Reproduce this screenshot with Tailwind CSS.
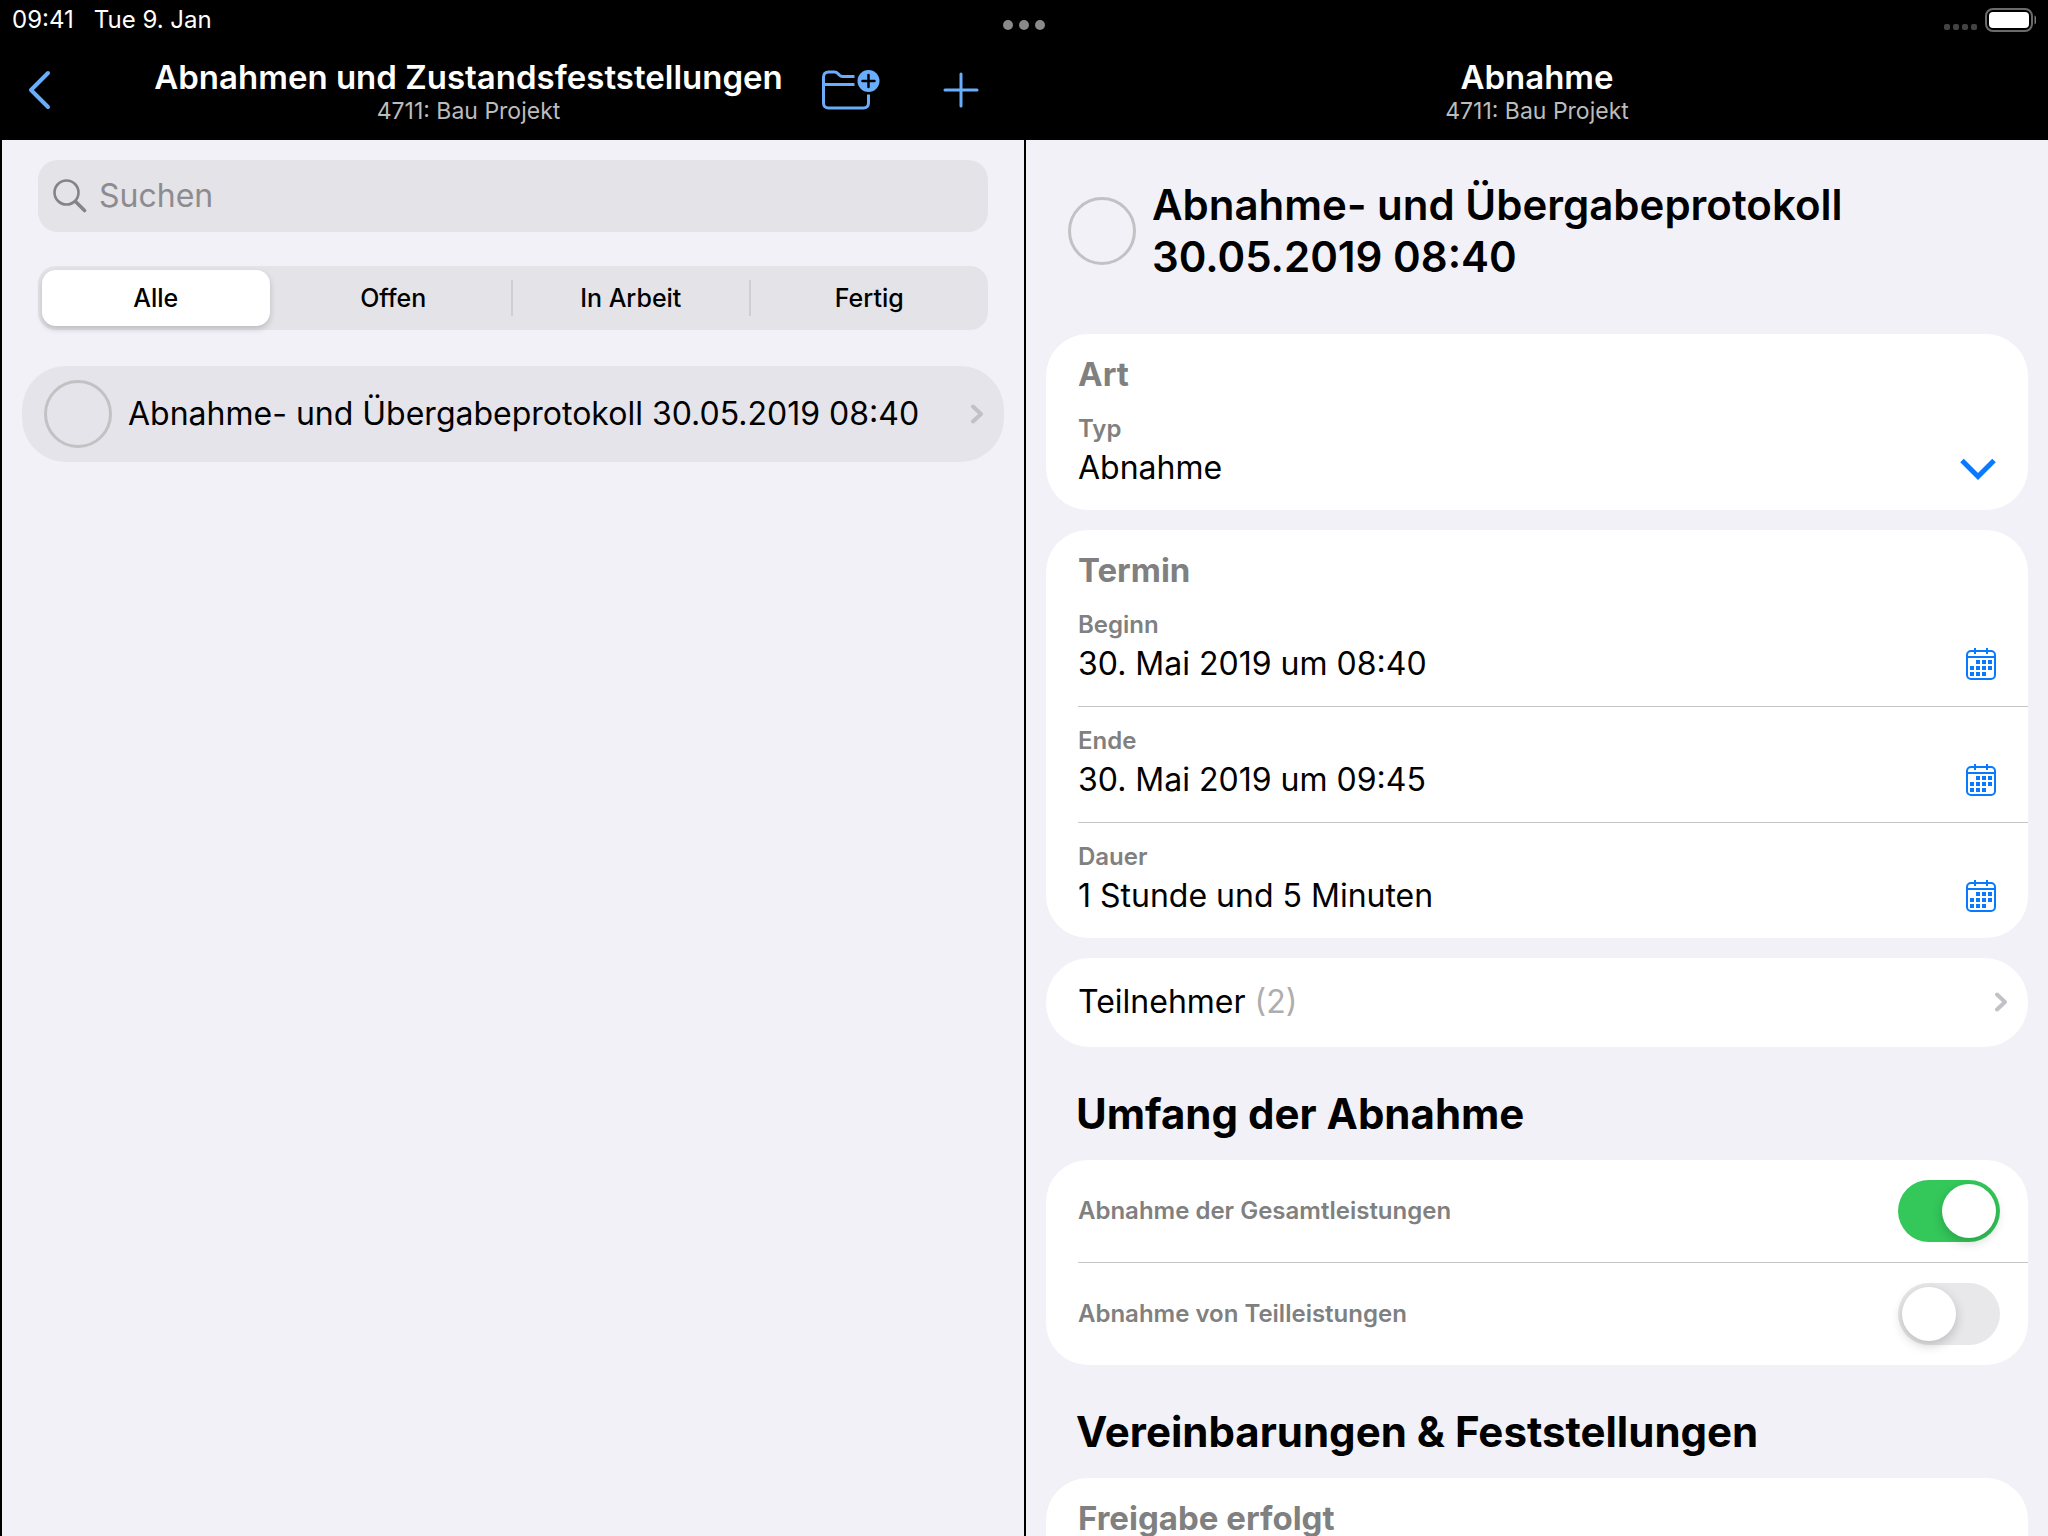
<!DOCTYPE html>
<html lang="de">
<head>
<meta charset="utf-8">
<meta name="viewport" content="width=device-width, initial-scale=1">
<title>Abnahmen und Zustandsfeststellungen</title>
<script src="https://cdn.jsdelivr.net/npm/@tailwindcss/browser@4"></script>
</head>
<body class="flex h-screen flex-col overflow-hidden bg-black font-['Inter','Liberation_Sans',sans-serif] text-black">

<!-- Status bar -->
<div class="grid h-10 shrink-0 grid-cols-3 px-3 text-[24px] leading-10 text-white">
  <div class="flex gap-5"><span>09:41</span><span>Tue 9. Jan</span></div>
  <button class="flex items-center justify-center gap-1.5 pt-2.5" aria-label="Multitasking">
    <span class="size-2.5 rounded-full bg-[#8a8a8a]"></span>
    <span class="size-2.5 rounded-full bg-[#8a8a8a]"></span>
    <span class="size-2.5 rounded-full bg-[#8a8a8a]"></span>
  </button>
  <div class="flex items-center justify-end">
    <svg class="h-10 w-24" viewBox="0 0 96 40" aria-hidden="true">
      <g fill="#434343"><rect x="4" y="24" width="6" height="6" rx="2"/><rect x="13" y="24" width="6" height="6" rx="2"/><rect x="22" y="24" width="6" height="6" rx="2"/><rect x="31" y="24" width="6" height="6" rx="2"/></g>
      <rect x="46" y="9" width="46" height="22" rx="7" fill="none" stroke="#6b6b6b" stroke-width="2"/>
      <rect x="49" y="12" width="40" height="16" rx="4" fill="#fff"/>
      <path d="M94.500 15.500c3 1.500 3 7.500 0 9z" fill="#7a7a7a"/>
    </svg>
  </div>
</div>

<div class="flex min-h-0 flex-1">

  <!-- Master list -->
  <section class="flex w-1/2 flex-col border-l-2 border-black">
    <header class="flex h-[100px] shrink-0 items-center text-white">
      <div class="w-[113px] shrink-0">
        <button class="block pl-[26px]" aria-label="Zurück">
          <svg class="h-10 w-6" viewBox="0 0 24 40" fill="none" stroke="#6aaefb" stroke-width="4" stroke-linecap="round" stroke-linejoin="round"><path d="M20 3 3 20l17 17"/></svg>
        </button>
      </div>
      <div class="flex-1 pt-0.5 text-center whitespace-nowrap">
        <h1 class="-mx-4 text-[33px] leading-10 font-semibold">Abnahmen und Zustandsfeststellungen</h1>
        <p class="text-[23px] leading-7 text-[#bcbcbc]">4711: Bau Projekt</p>
      </div>
      <div class="flex w-[202px] shrink-0 items-center justify-between pr-[45px]">
        <button aria-label="Neuer Ordner">
          <svg class="h-10 w-[58px]" viewBox="0 0 58 40" fill="none" stroke="#6aaefb" stroke-width="3" stroke-linecap="round" stroke-linejoin="round">
            <path d="M32.500 6.500H20.500c-1.500 0-2.200-.5-3.200-1.500l-1.200-1.300c-1-1-2-1.700-3.600-1.700H6.500c-3 0-5 2-5 5V33c0 3 2 5 5 5h35c3 0 5-2 5-5v-8.500" stroke-linecap="butt"/>
            <path d="M1.500 14.500h31" stroke-linecap="butt"/>
            <circle cx="46.500" cy="11" r="11" fill="#6aaefb" stroke="none"/>
            <path d="M46.500 5v12M40.500 11h12" stroke="#000" stroke-width="2.500"/>
          </svg>
        </button>
        <button aria-label="Hinzufügen">
          <svg class="size-9" viewBox="0 0 36 36" fill="none" stroke="#6aaefb" stroke-width="3" stroke-linecap="round"><path d="M18 2v32M2 18h32"/></svg>
        </button>
      </div>
    </header>

    <div class="flex-1 bg-[#f2f1f7] pt-5">
      <label class="mx-9 flex h-[72px] items-center gap-3 rounded-[20px] bg-[#e4e3e8] pl-[15px]">
        <svg class="size-[34px] shrink-0" viewBox="0 0 34 34" fill="none" stroke="#848488" stroke-linecap="round"><circle cx="13.500" cy="13.500" r="12" stroke-width="2.600"/><path d="m23 23 8.500 8.500" stroke-width="3.600"/></svg>
        <input type="search" aria-label="Suchen" placeholder="Suchen" class="w-full bg-transparent text-[32px] leading-10 outline-none placeholder:text-[#8c8c90]">
      </label>

      <div role="radiogroup" aria-label="Status" class="mx-9 mt-[34px] grid h-16 grid-cols-4 rounded-[18px] bg-[#e4e3e8] text-[25px] font-medium">
        <label class="py-1 pr-1.5 pl-1"><input type="radio" name="status" class="peer sr-only" checked><span class="flex h-full items-center justify-center rounded-[14px] bg-white pt-0.5 shadow-[0_3px_6px_rgba(0,0,0,0.18)]">Alle</span></label>
        <label class="flex items-center"><input type="radio" name="status" class="sr-only"><span class="flex h-9 flex-1 items-center justify-center border-r-2 border-[#cfced4] pt-0.5">Offen</span></label>
        <label class="flex items-center"><input type="radio" name="status" class="sr-only"><span class="flex h-9 flex-1 items-center justify-center border-r-2 border-[#cfced4] pt-0.5">In Arbeit</span></label>
        <label class="flex items-center"><input type="radio" name="status" class="sr-only"><span class="flex h-9 flex-1 items-center justify-center pt-0.5">Fertig</span></label>
      </div>

      <a href="#protokoll" class="mx-5 mt-9 flex h-24 items-center rounded-[44px] bg-[#e5e4ea] pr-[21px] pl-[22px]">
        <span class="size-[68px] shrink-0 rounded-full border-3 border-[#c2c2c5]"></span>
        <span class="ml-4 flex-1 text-[32px] leading-10 whitespace-nowrap">Abnahme- und Übergabeprotokoll 30.05.2019 08:40</span>
        <svg class="h-5 w-3 shrink-0" viewBox="0 0 12 20" fill="none" stroke="#c2c1c7" stroke-width="4" stroke-linecap="round" stroke-linejoin="round"><path d="m2 2.500 8 7.500-8 7.500"/></svg>
      </a>
    </div>
  </section>

  <!-- Detail -->
  <section id="protokoll" class="flex w-1/2 flex-col border-l-2 border-black">
    <header class="flex h-[100px] shrink-0 flex-col justify-center pt-0.5 text-center text-white">
      <h2 class="text-[33px] leading-10 font-semibold">Abnahme</h2>
      <p class="text-[23px] leading-7 text-[#bcbcbc]">4711: Bau Projekt</p>
    </header>

    <div class="min-h-0 flex-1 overflow-hidden bg-[#f2f1f7] px-5">
      <div class="flex h-[194px] items-center pb-3 pl-[22px]">
        <span class="size-[68px] shrink-0 rounded-full border-3 border-[#c2c2c5]"></span>
        <h3 class="ml-4 text-[42px] leading-[52px] font-semibold">Abnahme- und Übergabeprotokoll<br>30.05.2019 08:40</h3>
      </div>

      <section class="rounded-[42px] bg-white pl-8">
        <h4 class="h-[60px] pt-5 text-[33px] leading-10 font-bold text-[#808080]">Art</h4>
        <div class="relative h-[116px] pt-5">
          <label for="typ" class="block text-[24px] leading-[30px] font-semibold text-[#808080]">Typ</label>
          <select id="typ" class="block h-12 w-full appearance-none bg-transparent text-[32px] leading-[48px] outline-none"><option>Abnahme</option></select>
          <svg class="pointer-events-none absolute right-8 bottom-[30px] h-[22px] w-9" viewBox="0 0 36 22" fill="none" stroke="#077aff" stroke-width="5"><path d="m2 2.500 16 16 16-16"/></svg>
        </div>
      </section>

      <section class="mt-5 rounded-[42px] bg-white pl-8">
        <h4 class="h-[60px] pt-5 text-[33px] leading-10 font-bold text-[#808080]">Termin</h4>
        <div class="flex h-[116px] items-start pt-5 pr-8">
          <div class="flex-1">
            <label for="beginn" class="block text-[24px] leading-[30px] font-semibold text-[#808080]">Beginn</label>
            <input id="beginn" value="30. Mai 2019 um 08:40" class="block h-12 w-full bg-transparent text-[32px] outline-none">
          </div>
          <button class="pt-[38px]" aria-label="Beginn wählen"><svg class="h-8 w-[30px]" viewBox="0 0 30 32"><use href="#calendar"/></svg></button>
        </div>
        <div class="flex h-[116px] items-start border-t border-[#c6c6c8] pt-[19px] pr-8">
          <div class="flex-1">
            <label for="ende" class="block text-[24px] leading-[30px] font-semibold text-[#808080]">Ende</label>
            <input id="ende" value="30. Mai 2019 um 09:45" class="block h-12 w-full bg-transparent text-[32px] outline-none">
          </div>
          <button class="pt-[38px]" aria-label="Ende wählen"><svg class="h-8 w-[30px]" viewBox="0 0 30 32"><use href="#calendar"/></svg></button>
        </div>
        <div class="flex h-[116px] items-start border-t border-[#c6c6c8] pt-[19px] pr-8">
          <div class="flex-1">
            <label for="dauer" class="block text-[24px] leading-[30px] font-semibold text-[#808080]">Dauer</label>
            <input id="dauer" value="1 Stunde und 5 Minuten" class="block h-12 w-full bg-transparent text-[32px] outline-none">
          </div>
          <button class="pt-[38px]" aria-label="Dauer wählen"><svg class="h-8 w-[30px]" viewBox="0 0 30 32"><use href="#calendar"/></svg></button>
        </div>
      </section>

      <a href="#teilnehmer" class="mt-5 flex h-[89px] items-center justify-between rounded-[44px] bg-white pr-[21px] pb-px pl-8 text-[32px] leading-10">
        <span>Teilnehmer <span class="text-[#aeaeae]">(2)</span></span>
        <svg class="h-5 w-3" viewBox="0 0 12 20" fill="none" stroke="#c2c1c7" stroke-width="4" stroke-linecap="round" stroke-linejoin="round"><path d="m2 2.500 8 7.500-8 7.500"/></svg>
      </a>

      <h3 class="h-[113px] pt-[41px] pl-[30px] text-[42px] leading-[52px] font-bold">Umfang der Abnahme</h3>
      <section class="rounded-[42px] bg-white pl-8 text-[24px] font-semibold text-[#808080]">
        <label class="flex h-[102px] items-center justify-between pr-7">Abnahme der Gesamtleistungen
          <input type="checkbox" role="switch" checked class="flex h-[62px] w-[102px] appearance-none rounded-full bg-[#e8e8ea] p-1 before:size-[54px] before:rounded-full before:bg-white before:shadow-[0_4px_12px_rgba(0,0,0,0.2)] checked:justify-end checked:bg-[#34c85a]">
        </label>
        <label class="flex h-[103px] items-center justify-between border-t border-[#c6c6c8] pr-7">Abnahme von Teilleistungen
          <input type="checkbox" role="switch" class="flex h-[62px] w-[102px] appearance-none rounded-full bg-[#e8e8ea] p-1 before:size-[54px] before:rounded-full before:bg-white before:shadow-[0_4px_12px_rgba(0,0,0,0.2)] checked:justify-end checked:bg-[#34c85a]">
        </label>
      </section>

      <h3 class="h-[113px] pt-[41px] pl-[30px] text-[42px] leading-[52px] font-bold">Vereinbarungen &amp; Feststellungen</h3>
      <section class="h-44 rounded-[42px] bg-white pl-8">
        <h4 class="h-[60px] pt-5 text-[33px] leading-10 font-bold text-[#808080]">Freigabe erfolgt</h4>
      </section>
    </div>
  </section>
</div>

<svg class="hidden" aria-hidden="true">
  <symbol id="calendar" viewBox="0 0 30 32">
    <g fill="none" stroke="#077aff" stroke-width="2"><rect x="1" y="3" width="28" height="28" rx="4"/><path d="M1 9h28M9 0v6M21 0v6"/></g>
    <g fill="#077aff"><path d="M10 12h4v4h-4zM16 12h4v4h-4zM22 12h4v4h-4zM4 18h4v4H4zM10 18h4v4h-4zM16 18h4v4h-4zM22 18h4v4h-4zM4 24h4v4H4zM10 24h4v4h-4zM16 24h4v4h-4z"/></g>
  </symbol>
</svg>
</body>
</html>
